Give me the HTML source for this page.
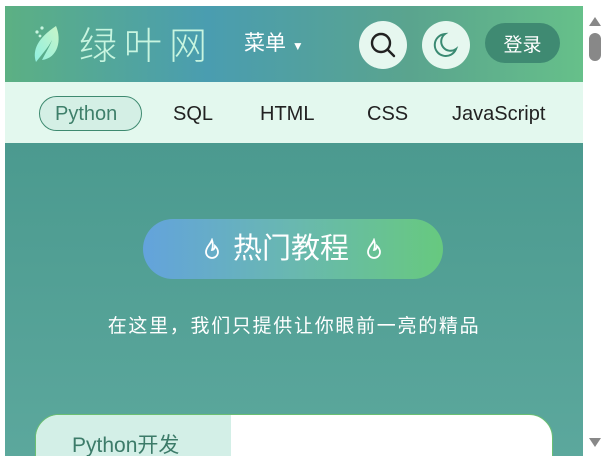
<!DOCTYPE html>
<html><head><meta charset="utf-8"><style>
*{margin:0;padding:0;box-sizing:border-box}
body{width:608px;height:469px;background:#fff;position:relative;overflow:hidden;font-family:"Liberation Sans","Noto Sans CJK SC",sans-serif}
#page{position:absolute;left:5px;top:6px;width:578px;height:450px;overflow:hidden}
header{position:absolute;left:0;top:0;width:578px;height:76px;background:linear-gradient(90deg,#5cb083 0%,#4a9db0 35%,#5aa48e 70%,#66c08a 100%)}
.logo{position:absolute;left:74px;top:12px;font-size:38px;font-weight:300;color:#c8f5e0;letter-spacing:7px;font-family:"Noto Sans CJK SC",sans-serif;line-height:50px}
.menu{position:absolute;left:239px;top:24px;color:#fff;font-size:21px;line-height:28px}
.circ{position:absolute;top:15px;width:48px;height:48px;border-radius:50%;background:#e6f7ef}
.login{position:absolute;left:480px;top:17px;width:75px;height:40px;border-radius:20px;background:#3f8a72;color:#fff;font-size:19px;text-align:center;line-height:46px}
nav{position:absolute;top:76px;left:0;width:578px;height:61px;background:#e3f8ee}
nav span{position:absolute;top:21px;font-size:20px;color:#222}
.pill{position:absolute;left:34px;top:14px;width:103px;height:35px;border:1px solid #3e8a70;border-radius:18px;background:#d4efe5}
main{position:absolute;top:137px;left:0;width:578px;height:320px;background:linear-gradient(180deg,#4b9a8f,#5ca89d)}
.hot{position:absolute;left:138px;top:76px;width:300px;height:60px;border-radius:30px;background:linear-gradient(90deg,#63a3dc,#69b8b0 50%,#67c97f);color:#fff;font-size:29px;text-align:center;line-height:60px}
.sub{position:absolute;left:0;width:578px;top:168px;text-align:center;color:#fff;font-size:19px;letter-spacing:1.7px}
.card{position:absolute;left:30px;top:271px;width:518px;height:60px;border-radius:24px 24px 0 0;background:#fff;border:1px solid #6bbf73;overflow:hidden}
.tab{position:absolute;left:0;top:0;width:195px;height:60px;background:#d3efe7;color:#3c7b69;font-size:21px;padding:14px 0 0 36px}
.sb{position:absolute;left:583px;top:6px;width:25px;height:450px;background:#fff}
</style></head><body>
<div id="page">
<header>
<svg style="position:absolute;left:27px;top:18px" width="30" height="40" viewBox="0 0 30 40"><defs><linearGradient id="g" x1="0" y1="1" x2="1" y2="0"><stop offset="0" stop-color="#8ff0e0"/><stop offset="1" stop-color="#c9f5c8"/></linearGradient></defs><path d="M4 38 C0 26 6 14 24 2 C30 16 26 34 10 36 C14 28 18 22 20 16 C16 24 10 30 4 38Z" fill="url(#g)"/><circle cx="5" cy="8" r="1.6" fill="#c8f5e0"/><circle cx="10" cy="4" r="1.6" fill="#c8f5e0"/><circle cx="8" cy="12" r="1.4" fill="#c8f5e0"/></svg>
<div class="logo">绿叶网</div>
<div class="menu">菜单 <span style="font-size:12px">▼</span></div>
<div class="circ" style="left:354px"><svg width="48" height="48" viewBox="0 0 48 48"><circle cx="22" cy="22" r="9" fill="none" stroke="#222" stroke-width="2.4"/><path d="M28.5 28.5 L35 35" stroke="#222" stroke-width="2.4" stroke-linecap="round"/></svg></div>
<div class="circ" style="left:417px"><svg width="48" height="48" viewBox="0 0 48 48"><path d="M23 13 A11 11 0 1 0 34 28 A9 9 0 0 1 23 13Z" fill="none" stroke="#3a8a72" stroke-width="2"/></svg></div>
<div class="login">登录</div>
</header>
<nav>
<div class="pill"></div>
<span style="left:50px;color:#3e7f6a">Python</span>
<span style="left:168px">SQL</span>
<span style="left:255px">HTML</span>
<span style="left:362px">CSS</span>
<span style="left:447px;width:131px;overflow:hidden;white-space:nowrap">JavaScript</span>
</nav>
<main>
<div class="hot"><svg width="18" height="22" viewBox="0 0 18 22" style="vertical-align:-2px;margin-right:12px"><path d="M9 2 C7 7 3 9 3 14 A6 6 0 0 0 15 14 C15 11 13 9 12 8 C12 11 10 12 9 12 C10 9 10 5 9 2Z" fill="none" stroke="#fff" stroke-width="1.8"/></svg>热门教程<svg width="18" height="22" viewBox="0 0 18 22" style="vertical-align:-2px;margin-left:16px"><path d="M9 2 C7 7 3 9 3 14 A6 6 0 0 0 15 14 C15 11 13 9 12 8 C12 11 10 12 9 12 C10 9 10 5 9 2Z" fill="none" stroke="#fff" stroke-width="1.8"/></svg></div>
<div class="sub">在这里，我们只提供让你眼前一亮的精品</div>
<div class="card"><div class="tab">Python开发</div></div>
</main>
</div>
<div class="sb">
<svg width="25" height="450"><path d="M6 20 L12 11 L18 20Z" fill="#888"/><rect x="6" y="27" width="12" height="28" rx="6" fill="#888"/><path d="M6 432 L18 432 L12 441Z" fill="#888"/></svg>
</div>
</body></html>
